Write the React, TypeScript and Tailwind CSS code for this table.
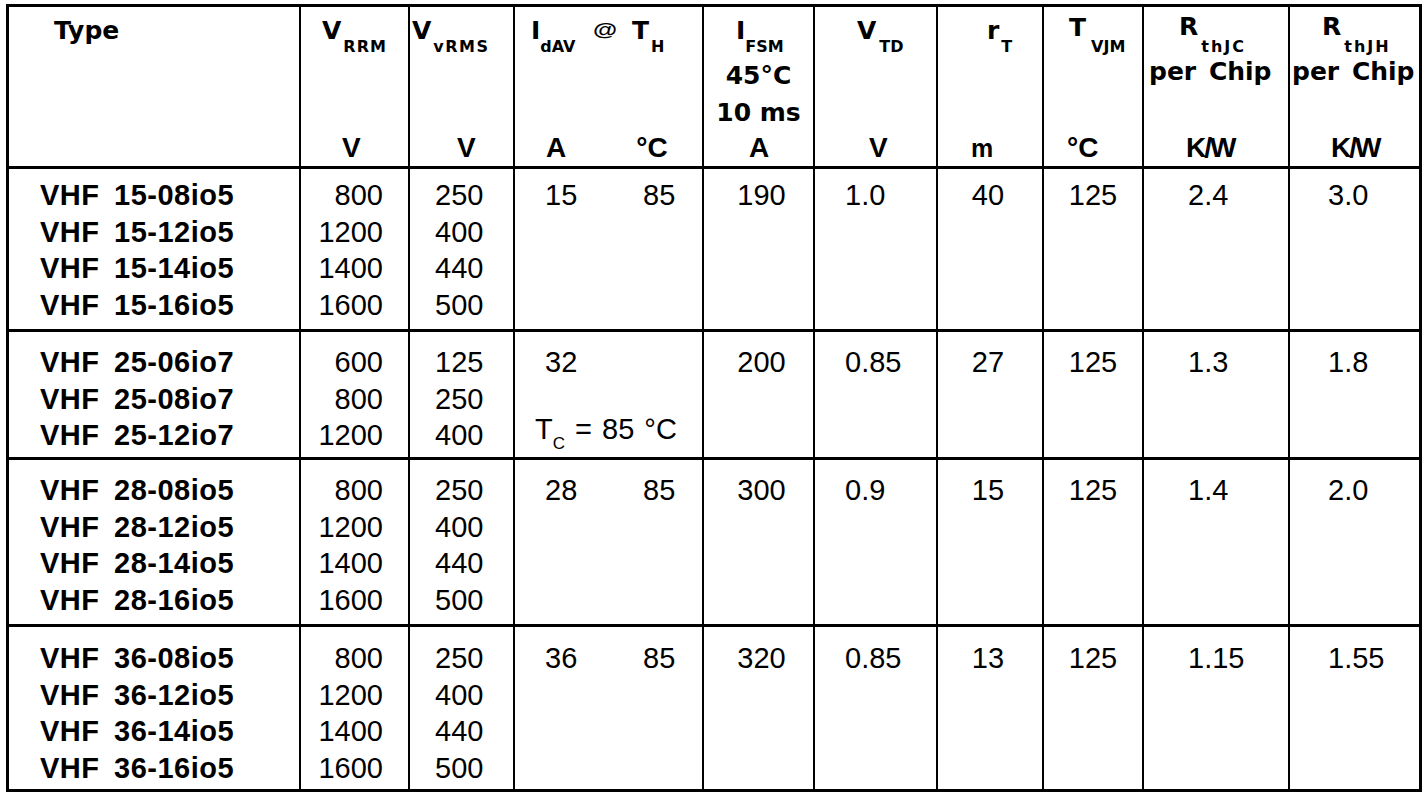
import React from "react";
import clsx from "clsx";

type Group = {
  pt: string;
  types: string[];
  vrrm: string[];
  vrms: string[];
  idav: string;
  th: string;
  ifsm: string;
  vtd: string;
  rt: string;
  tvjm: string;
  rjc: string;
  rjh: string;
  tc?: boolean;
};

const groups: Group[] = [
  {
    pt: "pt-[8px]",
    types: ["VHF 15-08io5", "VHF 15-12io5", "VHF 15-14io5", "VHF 15-16io5"],
    vrrm: ["800", "1200", "1400", "1600"],
    vrms: ["250", "400", "440", "500"],
    idav: "15",
    th: "85",
    ifsm: "190",
    vtd: "1.0",
    rt: "40",
    tvjm: "125",
    rjc: "2.4",
    rjh: "3.0",
  },
  {
    pt: "pt-[12px]",
    types: ["VHF 25-06io7", "VHF 25-08io7", "VHF 25-12io7"],
    vrrm: ["600", "800", "1200"],
    vrms: ["125", "250", "400"],
    idav: "32",
    th: "",
    ifsm: "200",
    vtd: "0.85",
    rt: "27",
    tvjm: "125",
    rjc: "1.3",
    rjh: "1.8",
    tc: true,
  },
  {
    pt: "pt-[12px]",
    types: ["VHF 28-08io5", "VHF 28-12io5", "VHF 28-14io5", "VHF 28-16io5"],
    vrrm: ["800", "1200", "1400", "1600"],
    vrms: ["250", "400", "440", "500"],
    idav: "28",
    th: "85",
    ifsm: "300",
    vtd: "0.9",
    rt: "15",
    tvjm: "125",
    rjc: "1.4",
    rjh: "2.0",
  },
  {
    pt: "pt-[13px]",
    types: ["VHF 36-08io5", "VHF 36-12io5", "VHF 36-14io5", "VHF 36-16io5"],
    vrrm: ["800", "1200", "1400", "1600"],
    vrms: ["250", "400", "440", "500"],
    idav: "36",
    th: "85",
    ifsm: "320",
    vtd: "0.85",
    rt: "13",
    tvjm: "125",
    rjc: "1.15",
    rjh: "1.55",
  },
];

function Cell({
  children,
  last,
  bottom,
  className,
}: {
  children?: React.ReactNode;
  last?: boolean;
  bottom?: boolean;
  className?: string;
}) {
  return (
    <div
      className={clsx(
        "border-black overflow-hidden",
        !last && "border-r-2",
        !bottom && "border-b-[3px]",
        className
      )}
    >
      {children}
    </div>
  );
}

function Sub({ children, className }: { children: React.ReactNode; className?: string }) {
  return (
    <span className={clsx("relative top-[13px] text-[16px] leading-none", className)}>
      {children}
    </span>
  );
}

const H = "font-['DejaVu_Sans',sans-serif] font-bold text-[25px] text-black";
const U = "font-['Liberation_Sans',Arial,sans-serif] font-bold text-[28px] leading-[28px] whitespace-pre";

function HeadCell({
  line1,
  extra,
  unit,
  last,
}: {
  line1: React.ReactNode;
  extra?: React.ReactNode;
  unit?: React.ReactNode;
  last?: boolean;
}) {
  return (
    <Cell last={last} className={clsx("flex flex-col justify-between pt-[10px] pb-[4px]", H)}>
      <div>
        <div className="leading-[28px] whitespace-pre">{line1}</div>
        {extra}
      </div>
      <div className={U}>{unit}</div>
    </Cell>
  );
}

function Rows({ items, className }: { items: React.ReactNode[]; className?: string }) {
  return (
    <>
      {items.map((t, i) => (
        <div key={i} className={clsx("h-[36.5px] leading-[36.5px] whitespace-pre", className)}>
          {t}
        </div>
      ))}
    </>
  );
}

export default function App() {
  return (
    <div className="min-h-screen bg-white text-black">
      <div
        className="ml-[6px] mt-[4px] w-[1416px] border-[3px] border-black grid grid-cols-[292px_109px_105px_189px_111px_123px_106px_100px_146px_129px] grid-rows-[162px_163px_128px_167px_162px] font-['Liberation_Sans',Arial,sans-serif] text-[29px]"
      >
        {/* Header */}
        <HeadCell line1={<span className="pl-[45px]">Type</span>} />
        <HeadCell
          line1={
            <span className="pl-[21px]">
              V<Sub className="ml-[2px] tracking-[1px]">RRM</Sub>
            </span>
          }
          unit={<span className="pl-[41px]">V</span>}
        />
        <HeadCell
          line1={
            <span className="pl-[2px]">
              V<Sub className="ml-[2px] tracking-[1.5px]">vRMS</Sub>
            </span>
          }
          unit={<span className="pl-[47px]">V</span>}
        />
        <HeadCell
          line1={
            <span className="pl-[16px]">
              I<Sub>dAV</Sub>
              <span className="ml-[18px] inline-block origin-left scale-x-[1.3] font-['Liberation_Sans',Arial,sans-serif] text-[19px] relative -top-[3px]">
                @
              </span>
              <span className="ml-[20px]">T</span>
              <Sub className="ml-[2px]">H</Sub>
            </span>
          }
          unit={
            <span className="pl-[31px]">
              A<span className="ml-[70px]">°C</span>
            </span>
          }
        />
        <HeadCell
          line1={
            <span className="pl-[32px]">
              I<Sub>FSM</Sub>
            </span>
          }
          extra={
            <div className="mt-[12px] text-center leading-[37px]">
              <div>45°C</div>
              <div>10 ms</div>
            </div>
          }
          unit={<span className="pl-[45px]">A</span>}
        />
        <HeadCell
          line1={
            <span className="pl-[42px]">
              V<Sub className="ml-[3px] text-[14px]">TD</Sub>
            </span>
          }
          unit={<span className="pl-[54px]">V</span>}
        />
        <HeadCell
          line1={
            <span className="pl-[49px]">
              r<Sub className="ml-[2px]">T</Sub>
            </span>
          }
          unit={<span className="pl-[33px] text-[25px]">m</span>}
        />
        <HeadCell
          line1={
            <span className="pl-[25px]">
              <span className="relative -top-[3px]">T</span>
              <Sub className="ml-[5px]">VJM</Sub>
            </span>
          }
          unit={<span className="pl-[23px]">°C</span>}
        />
        <HeadCell
          line1={
            <span className="pl-[35px]">
              <span className="relative -top-[4px]">R</span>
              <Sub className="ml-[3px] tracking-[2px]">thJC</Sub>
            </span>
          }
          extra={
            <div className="mt-[8px] pl-[5px] leading-[37px] whitespace-pre [word-spacing:4px]">
              per Chip
            </div>
          }
          unit={<span className="pl-[42px] tracking-[-2px]">K/W</span>}
        />
        <HeadCell
          last
          line1={
            <span className="pl-[32px]">
              <span className="relative -top-[4px]">R</span>
              <Sub className="ml-[3px] tracking-[2px]">thJH</Sub>
            </span>
          }
          extra={
            <div className="mt-[8px] pl-[2px] leading-[37px] whitespace-pre [word-spacing:4px]">
              per Chip
            </div>
          }
          unit={<span className="pl-[41px] tracking-[-2px]">K/W</span>}
        />

        {/* Body groups */}
        {groups.map((g, gi) => {
          const bottom = gi === groups.length - 1;
          return (
            <React.Fragment key={gi}>
              <Cell bottom={bottom} className={clsx(g.pt, "pl-[31px] font-bold tracking-[0.5px] [word-spacing:6px]")}>
                <Rows items={g.types} />
              </Cell>
              <Cell bottom={bottom} className={clsx(g.pt, "pr-[25px] text-right")}>
                <Rows items={g.vrrm} />
              </Cell>
              <Cell bottom={bottom} className={clsx(g.pt, "pl-[25px]")}>
                <Rows items={g.vrms} />
              </Cell>
              <Cell bottom={bottom} className={g.pt}>
                <div className="h-[36.5px] leading-[36.5px] flex">
                  <span className="pl-[30px] w-[128px]">{g.idav}</span>
                  <span>{g.th}</span>
                </div>
                {g.tc && (
                  <>
                    <div className="h-[36.5px]" />
                    <div className="h-[36.5px] leading-[36.5px] pl-[20px] -mt-[6px] whitespace-pre [word-spacing:2px]">
                      T<span className="relative top-[10px] text-[17px] leading-none">C</span> = 85 °C
                    </div>
                  </>
                )}
              </Cell>
              <Cell bottom={bottom} className={clsx(g.pt, "text-center pl-[6px]")}>
                <Rows items={[g.ifsm]} />
              </Cell>
              <Cell bottom={bottom} className={clsx(g.pt, "pl-[30px]")}>
                <Rows items={[g.vtd]} />
              </Cell>
              <Cell bottom={bottom} className={clsx(g.pt, "text-center pr-[4px]")}>
                <Rows items={[g.rt]} />
              </Cell>
              <Cell bottom={bottom} className={clsx(g.pt, "text-center")}>
                <Rows items={[g.tvjm]} />
              </Cell>
              <Cell bottom={bottom} className={clsx(g.pt, "pl-[44px]")}>
                <Rows items={[g.rjc]} />
              </Cell>
              <Cell bottom={bottom} last className={clsx(g.pt, "pl-[38px]")}>
                <Rows items={[g.rjh]} />
              </Cell>
            </React.Fragment>
          );
        })}
      </div>
    </div>
  );
}
